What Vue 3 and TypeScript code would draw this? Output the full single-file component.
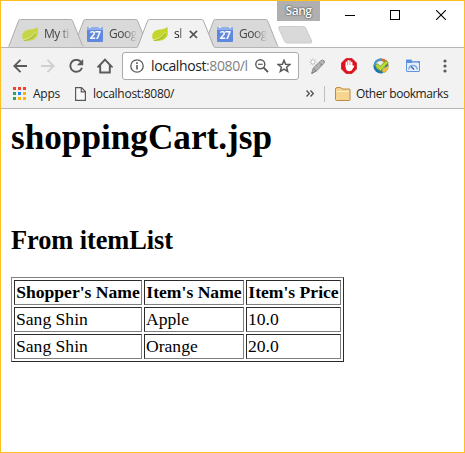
<script setup lang="ts">
interface Tab {
  title: string
  icon: 'leaf' | 'calendar'
  active: boolean
}

interface CartItem {
  shopper: string
  item: string
  price: string
}

const tabs: Tab[] = [
  { title: 'My ti', icon: 'leaf', active: false },
  { title: 'Goog', icon: 'calendar', active: false },
  { title: 'sl', icon: 'leaf', active: true },
  { title: 'Goog', icon: 'calendar', active: false },
]

const items: CartItem[] = [
  { shopper: 'Sang Shin', item: 'Apple', price: '10.0' },
  { shopper: 'Sang Shin', item: 'Orange', price: '20.0' },
]

const appColors: string[] = [
  '#f4402f', '#f4402f', '#f4402f',
  '#2ca45c', '#1b88f5', '#fbb400',
  '#2ca45c', '#fbb400', '#fbb400',
]
</script>

<template>
  <div class="window">
    <header class="titlebar">
      <div class="tabs">
        <div v-for="(tab, i) in tabs" :key="i" class="tab" :class="{ active: tab.active }">
          <svg class="tab-shape" width="79" height="29" viewBox="0 0 79 29">
            <path class="fill" d="M0 29 L1 27 L10.5 2 Q11 .5 12.5 .5 H64.5 Q66 .5 66.6 2 L76.5 27 L78 29Z" />
            <path class="edge" d="M0 28.5 L1 27 L10.5 2 Q11 .5 12.5 .5 H64.5 Q66 .5 66.6 2 L76.5 27 L78 28.5" />
          </svg>
          <svg v-if="tab.icon === 'leaf'" class="favicon" width="16" height="16" viewBox="0 0 16 16">
            <path d="M15.3 .8 C13.5 3 11.5 3.3 8 3.5 C3.5 3.8 .2 6.2 .2 10.4 C.2 13 1.7 14.7 4 14.9 C10 15.3 14.8 13 15.7 8.5 C16 6 15.8 3 15.3 .8Z" fill="#c4d62e" />
            <path d="M.8 14.3 C6 13.7 10.8 11.5 14.2 5.5 C13.5 11 8.5 14 2.5 14.8Z" fill="#92b719" />
            <path d="M.5 13.8 C6 13.3 10.5 11 13.7 6" fill="none" stroke="#e9eea2" stroke-width=".8" />
          </svg>
          <svg v-else class="favicon" width="16" height="16" viewBox="0 0 16 16">
            <rect y="1" width="16" height="15" rx="1" fill="#4c7be0" />
            <path d="M0 4 V2 Q0 1 1 1 H15 Q16 1 16 2 V4Z" fill="#85a9ee" />
            <path d="M3 .5 V2 M13 .5 V2" stroke="#e9eefb" stroke-width="2" />
            <text x="8" y="13" text-anchor="middle" class="day">27</text>
          </svg>
          <span class="tab-title">{{ tab.title }}</span>
          <svg v-if="tab.active" class="close-tab" width="9" height="9" viewBox="0 0 9 9">
            <path d="M.8 .8 L8 8 M8 .8 L.8 8" stroke="#555" stroke-width="1.7" />
          </svg>
        </div>
        <svg class="new-tab" width="36" height="18" viewBox="0 0 36 18">
          <path d="M2 .5 H25.5 Q27 .5 27.6 2 L33.7 15 Q34.3 17 32.5 17 H9.5 Q7.5 17 6.7 15.5 L.8 2.5 Q.3 .5 2 .5Z" fill="#d9d9d9" stroke="#cbcbcb" />
        </svg>
      </div>
      <div class="profile">Sang</div>
      <div class="controls">
        <svg width="10" height="10" viewBox="0 0 10 10"><path d="M0 5.5 H10" stroke="#000" /></svg>
        <svg width="10" height="10" viewBox="0 0 10 10"><rect x=".5" y=".5" width="9" height="9" fill="none" stroke="#000" /></svg>
        <svg class="close-window" width="10" height="10" viewBox="0 0 10 10"><path d="M0 0 L10 10 M10 0 L0 10" stroke="#000" stroke-width="1.1" /></svg>
      </div>
    </header>

    <nav class="toolbar">
      <svg class="nav-icon" width="14" height="14" viewBox="0 0 14 14">
        <path d="M14 7 H1.5 M7.5 .8 L1.3 7 L7.5 13.2" fill="none" stroke="#5a5a5a" stroke-width="1.9" />
      </svg>
      <svg class="nav-icon" width="14" height="14" viewBox="0 0 14 14">
        <path d="M0 7 H12.5 M6.5 .8 L12.7 7 L6.5 13.2" fill="none" stroke="#d0d0d0" stroke-width="1.9" />
      </svg>
      <svg class="nav-icon" width="15" height="14" viewBox="0 0 15 14">
        <path d="M12 3 A6 6 0 1 0 13 8.8" fill="none" stroke="#5a5a5a" stroke-width="1.9" />
        <path d="M14.2 0 V6.3 H7.9Z" fill="#5a5a5a" />
      </svg>
      <svg class="nav-icon home" width="16" height="16" viewBox="0 0 16 16">
        <path d="M1.5 8.5 L8 1.7 L14.5 8.5 H12.8 V14.5 H3.2 V8.5Z" fill="none" stroke="#5a5a5a" stroke-width="1.9" />
      </svg>
      <div class="omnibox">
        <svg width="14" height="14" viewBox="0 0 14 14">
          <circle cx="7" cy="7" r="6.2" fill="none" stroke="#5a5a5a" stroke-width="1.3" />
          <path d="M7 6 V10.5 M7 3.3 V4.9" stroke="#5a5a5a" stroke-width="1.6" />
        </svg>
        <span class="url">localhost<span class="url-rest">:8080/l</span></span>
        <svg class="zoom-icon" width="14" height="14" viewBox="0 0 14 14">
          <circle cx="5.3" cy="5.3" r="4.5" fill="none" stroke="#5a5a5a" stroke-width="1.4" />
          <path d="M3 5.3 H7.6" stroke="#5a5a5a" stroke-width="1.2" />
          <path d="M8.6 8.6 L13 13" stroke="#5a5a5a" stroke-width="1.9" />
        </svg>
        <svg class="star-icon" width="14" height="14" viewBox="0 0 14 14">
          <path d="M7 1.3 L8.6 5.2 L12.9 5.5 L9.6 8.2 L10.7 12.4 L7 10.1 L3.3 12.4 L4.4 8.2 L1.1 5.5 L5.4 5.2Z" fill="none" stroke="#5a5a5a" stroke-width="1.5" />
        </svg>
      </div>
      <div class="extensions">
        <svg width="16" height="16" viewBox="0 0 16 16">
          <path d="M2.5 15.5 L4.3 10 L11.8 2.8 Q13.5 1.2 15.2 2.8 Q16 4 14.8 5.4 L7.5 13Z" fill="#b3b3b3" stroke="#868686" stroke-width=".9" />
          <path d="M4.5 10.5 L7.3 13 M6.5 13 L3 15.5 M10.5 5 L13 7.3" stroke="#7c7c7c" stroke-width="1" />
          <path d="M4 .5 V7.5 M.5 4 H7.5 M1.5 1.5 L6.5 6.5 M6.5 1.5 L1.5 6.5" stroke="#aaa" stroke-width=".8" />
          <circle cx="4" cy="4" r="1.4" fill="#fff" />
        </svg>
        <svg width="16" height="16" viewBox="0 0 16 16">
          <path d="M5 .5 H11 L15.5 5 V11 L11 15.5 H5 L.5 11 V5Z" fill="#e1111b" stroke="#c8101a" stroke-width=".7" />
          <path d="M5.3 8 V4.2 M7.2 7.5 V2.7 M9 7.5 V3 M10.7 8 V4.5" stroke="#fff" stroke-width="1.5" stroke-linecap="round" />
          <path d="M4.6 7.3 H11.4 L12.2 8 L12.9 7.2 Q13.8 7.2 13 8.8 L10.7 12.5 Q8 14 5.8 12.5 Q4.6 11.5 4.6 9Z" fill="#fff" />
        </svg>
        <svg width="16" height="16" viewBox="0 0 16 16">
          <circle cx="8" cy="8" r="7.6" fill="#2373ae" />
          <path d="M.5 8 A7.5 7.5 0 0 1 8 .5 L9 5 L3.5 8Z" fill="#4a96c8" />
          <path d="M8 .4 A7.6 7.6 0 0 1 15.4 6.5 L12 7 L8 3.5Z" fill="#e86d1f" />
          <path d="M15.6 7 A7.6 7.6 0 0 1 10 15.3 L9 12Z" fill="#f1b83b" />
          <circle cx="7.5" cy="7.5" r="4.6" fill="#e9f0e8" />
          <path d="M2.2 7.7 L4.3 5.6 L7.2 8.5 L13 2.5 L15.3 4.8 L7.5 13.2Z" fill="#b7dc32" stroke="#658f13" stroke-width=".8" />
        </svg>
        <svg width="14" height="16" viewBox="0 0 14 16">
          <rect x=".5" y="3.5" width="13" height="10" rx=".5" fill="#e4eefc" stroke="#6196df" />
          <path d="M0 5 V2.5 Q0 1.5 1 1.5 H5 L6.5 3 H13 Q14 3 14 4.5 V5Z" fill="#5b91df" />
          <path d="M6 4.2 H12" stroke="#d8e7ff" stroke-width=".7" />
          <path d="M2.8 11.5 Q3 7.5 7 7.5 Q11 7.5 11.2 11.5" fill="none" stroke="#82abe4" stroke-width="1.5" />
          <path d="M5 8.5 L8 11.5" stroke="#34669f" stroke-width="1.3" />
        </svg>
        <svg width="4" height="14" viewBox="0 0 4 14" fill="#5a5a5a">
          <circle cx="2" cy="2" r="1.6" /><circle cx="2" cy="7" r="1.6" /><circle cx="2" cy="12" r="1.6" />
        </svg>
      </div>
    </nav>

    <div class="bookmarks">
      <div class="apps-grid">
        <i v-for="(color, i) in appColors" :key="i" :style="{ background: color }"></i>
      </div>
      <span class="apps-label">Apps</span>
      <svg class="page-icon" width="11" height="14" viewBox="0 0 11 14">
        <path d="M.6 .6 H6.5 L10.4 4.5 V13.4 H.6Z M6.3 .6 V4.8 H10.4" fill="#f8f8f8" stroke="#5a5a5a" stroke-width="1.2" />
      </svg>
      <span class="host-label">localhost:8080/</span>
      <svg class="more" width="8" height="7" viewBox="0 0 8 7">
        <path d="M.5 .5 L3.3 3.5 L.5 6.5 M4.5 .5 L7.3 3.5 L4.5 6.5" fill="none" stroke="#555" stroke-width="1.4" />
      </svg>
      <span class="divider"></span>
      <svg class="folder" width="16" height="14" viewBox="0 0 16 14">
        <path d="M.5 12.5 V2 Q.5 .6 2 .6 H5.5 Q6.5 .6 7 2 H14 Q15 2 15 3 V12.5 Q15 13.5 14 13.5 H1.5 Q.5 13.5 .5 12.5Z" fill="#f7d58f" stroke="#ba8b44" />
        <path d="M1.5 4.5 H14" stroke="#fff0c4" />
      </svg>
      <span class="other-label">Other bookmarks</span>
    </div>

    <main class="page">
      <h1>shoppingCart.jsp</h1>
      <h2>From itemList</h2>
      <table>
        <colgroup><col class="c1" /><col class="c2" /><col class="c3" /></colgroup>
        <thead>
          <tr><th>Shopper's Name</th><th>Item's Name</th><th>Item's Price</th></tr>
        </thead>
        <tbody>
          <tr v-for="(row, i) in items" :key="i">
            <td>{{ row.shopper }}</td><td>{{ row.item }}</td><td>{{ row.price }}</td>
          </tr>
        </tbody>
      </table>
    </main>
  </div>
</template>

<style>
body {
  background: #fff;
  overflow: hidden;
}
</style>

<style scoped>
.window {
  box-sizing: border-box;
  width: 465px;
  height: 453px;
  border: 1px solid #ffbf1e;
  background: #fff;
  overflow: hidden;
  font-family: "Open Sans", "Noto Sans", sans-serif;
  color: #222;
}
svg {
  display: block;
  flex: none;
}
.titlebar {
  display: flex;
  align-items: flex-start;
  box-sizing: border-box;
  height: 47px;
  border-bottom: 1px solid #b5b5b5;
}
.tabs {
  display: flex;
  width: 270px;
  height: 29px;
  flex: none;
  padding: 18px 0 0 6px;
}
.tab {
  position: relative;
  display: flex;
  align-items: center;
  box-sizing: border-box;
  width: 78px;
  height: 28px;
  flex: none;
  margin-right: -13px;
  padding: 2px 0 0 15px;
}
.tab:first-child {
  z-index: 1;
}
.tab.active {
  z-index: 2;
  height: 29px;
  padding-bottom: 1px;
}
.tab-shape {
  position: absolute;
  left: 0;
  top: 0;
}
.tab:not(.active) .tab-shape {
  height: 28px;
}
.fill {
  fill: #d9d9d9;
}
.active .fill {
  fill: #f2f2f2;
}
.edge {
  fill: none;
  stroke: #aaa;
}
.favicon {
  position: relative;
  opacity: 0.85;
}
.active .favicon {
  opacity: 1;
}
.day {
  font: bold 10.5px "Open Sans", sans-serif;
  letter-spacing: -0.4px;
  fill: #fff;
}
.tab-title {
  position: relative;
  width: 28px;
  margin-left: 6px;
  overflow: hidden;
  white-space: nowrap;
  font-size: 12px;
  line-height: 16px;
  letter-spacing: -0.5px;
  color: #444;
  -webkit-mask-image: linear-gradient(90deg, #000 55%, transparent 100%);
  mask-image: linear-gradient(90deg, #000 55%, transparent 100%);
}
.active .tab-title {
  width: 10px;
  color: #222;
}
.close-tab {
  position: relative;
  margin-left: 5px;
}
.new-tab {
  margin: 7px 0 0 11px;
  z-index: 1;
}
.profile {
  width: 43px;
  height: 19px;
  flex: none;
  background: #b0b0b0;
  padding-top: 1px;
  color: #fff;
  font-size: 12px;
  font-weight: 600;
  line-height: 18px;
  letter-spacing: -0.5px;
  text-align: center;
  text-shadow: 0 0 1px #333, 0 0 2px #444;
}
.controls {
  display: flex;
  gap: 35px;
  padding: 9px 0 0 25px;
}
.close-window {
  margin-left: 1px;
}
.toolbar {
  display: flex;
  align-items: center;
  box-sizing: border-box;
  height: 36px;
  padding: 0 0 0 12px;
  background: #f2f2f2;
}
.nav-icon {
  margin-right: 14px;
}
.home {
  margin: 0 9px 0 -1px;
}
.omnibox {
  display: flex;
  align-items: center;
  box-sizing: border-box;
  width: 177px;
  height: 28px;
  flex: none;
  padding-left: 7px;
  border: 1px solid #aaa;
  border-radius: 3px;
  background: #fff;
}
.url {
  width: 98px;
  margin-left: 7px;
  overflow: hidden;
  white-space: nowrap;
  font-size: 14px;
  line-height: 20px;
  letter-spacing: -0.4px;
}
.url-rest {
  color: #808080;
}
.zoom-icon {
  margin-left: 6px;
}
.star-icon {
  margin-left: 8px;
}
.extensions {
  display: flex;
  align-items: center;
  gap: 16px;
  margin-left: 10px;
}
.extensions svg:nth-child(4) {
  margin-left: 1px;
}
.extensions svg:last-child {
  margin-left: 7px;
}
.bookmarks {
  display: flex;
  align-items: center;
  box-sizing: border-box;
  height: 25px;
  padding: 0 0 5px 12px;
  border-bottom: 1px solid #b5b5b5;
  background: #f2f2f2;
  font-size: 12px;
  line-height: 16px;
  letter-spacing: -0.27px;
  white-space: nowrap;
}
.apps-grid {
  display: grid;
  grid-template-columns: repeat(3, 3px);
  grid-auto-rows: 3px;
  gap: 2px;
}
.apps-label {
  width: 30px;
  margin-left: 7px;
}
.page-icon {
  margin-left: 12px;
}
.host-label {
  width: 90px;
  margin-left: 7px;
}
.more {
  margin-left: 123px;
}
.divider {
  width: 1px;
  height: 16px;
  margin-left: 10px;
  background: #bebebe;
}
.folder {
  margin-left: 10px;
}
.other-label {
  margin-left: 5px;
  letter-spacing: -0.42px;
}
.page {
  padding: 9px 10px;
  font-family: "Liberation Serif", serif;
  font-size: 17.6px;
  color: #000;
}
h1 {
  margin: 0;
  font-size: 35.2px;
  line-height: 40px;
}
h2 {
  margin: 67px 0 0;
  font-size: 26.4px;
  line-height: 30px;
  letter-spacing: -0.08px;
}
table {
  width: 333px;
  margin-top: 22px;
  table-layout: fixed;
  border-collapse: separate;
  border-spacing: 2px;
  border: 1px solid;
  border-color: #808080 #2b2b2b #2b2b2b #808080;
}
.c1 {
  width: 128px;
}
.c2 {
  width: 100px;
}
.c3 {
  width: 95px;
}
th,
td {
  box-sizing: border-box;
  height: 25px;
  padding: 1px;
  border: 1px solid;
  border-color: #2b2b2b #808080 #808080 #2b2b2b;
  line-height: 21px;
  white-space: nowrap;
  text-align: left;
}
th {
  text-align: center;
}
</style>
